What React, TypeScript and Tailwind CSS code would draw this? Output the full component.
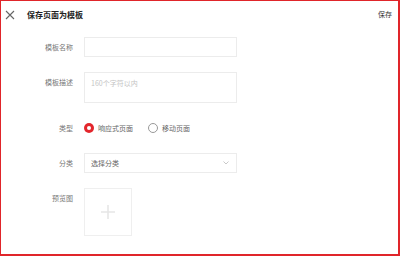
import { useState } from 'react'

const font = { fontFamily: '"Noto Sans CJK SC", "Noto Sans", sans-serif' }

function Row({ label, children, top }: { label: string; children: React.ReactNode; top?: boolean }) {
  return (
    <div className={`flex gap-[11px] ${top ? 'items-start' : 'items-center'}`}>
      <div className={`w-[72px] shrink-0 text-right text-[7px] text-[#777] ${top ? 'leading-[20px]' : ''}`}>{label}</div>
      {children}
    </div>
  )
}

export default function App() {
  const [kind, setKind] = useState<'responsive' | 'mobile'>('responsive')

  return (
    <div
      style={font}
      className="box-border flex h-[256px] w-[400px] flex-col border-b-2 border-l border-r-2 border-t border-[#e0252a] bg-white"
    >
      <div className="flex h-[27px] shrink-0 items-center pl-[4px] pr-[6px]">
        <svg width="10" height="10" viewBox="0 0 10 10" className="mt-[1px]">
          <path d="M1 1L9 9M9 1L1 9" stroke="#666" strokeWidth="1.1" fill="none" />
        </svg>
        <span className="ml-[12px] text-[8px] font-bold text-[#222]">保存页面为模板</span>
        <span className="ml-auto -mt-[1px] text-[7px] text-[#333]">保存</span>
      </div>

      <div className="flex flex-col gap-[15px] pt-[9px]">
        <Row label="模板名称">
          <input className="h-[20px] w-[153px] border border-[#ececec] px-[6px] text-[7px] outline-none" />
        </Row>

        <Row label="模板描述" top>
          <textarea
            placeholder="160个字符以内"
            className="h-[31px] w-[153px] resize-none border border-[#ececec] px-[6px] py-[5px] text-[7px] leading-[10px] outline-none placeholder:text-[#c4c4c4]"
          />
        </Row>

        <Row label="类型">
          <div className="flex h-[20px] items-center text-[7px] text-[#666]">
            <button type="button" onClick={() => setKind('responsive')} className="flex items-center">
              {kind === 'responsive' ? (
                <span className="flex h-[10px] w-[10px] items-center justify-center rounded-full bg-[#e3262c]">
                  <span className="h-[4px] w-[4px] rounded-full bg-white" />
                </span>
              ) : (
                <span className="h-[10px] w-[10px] rounded-full border border-[#999]" />
              )}
              <span className="ml-[4px]">响应式页面</span>
            </button>
            <button type="button" onClick={() => setKind('mobile')} className="ml-[15px] flex items-center">
              {kind === 'mobile' ? (
                <span className="flex h-[10px] w-[10px] items-center justify-center rounded-full bg-[#e3262c]">
                  <span className="h-[4px] w-[4px] rounded-full bg-white" />
                </span>
              ) : (
                <span className="h-[10px] w-[10px] rounded-full border border-[#999]" />
              )}
              <span className="ml-[4px]">移动页面</span>
            </button>
          </div>
        </Row>

        <Row label="分类">
          <div className="flex h-[20px] w-[153px] items-center border border-[#ececec] pl-[6px] pr-[7px] text-[7px] text-[#666]">
            <span>选择分类</span>
            <svg width="6" height="4" viewBox="0 0 6 4" className="ml-auto">
              <path d="M0.5 0.5L3 3L5.5 0.5" stroke="#bbb" strokeWidth="0.8" fill="none" />
            </svg>
          </div>
        </Row>

        <Row label="预览图" top>
          <button
            type="button"
            className="flex h-[48px] w-[48px] items-center justify-center border border-[#efefef]"
          >
            <svg width="14" height="14" viewBox="0 0 14 14">
              <path d="M7 0V14M0 7H14" stroke="#e6e6e6" strokeWidth="1.6" fill="none" />
            </svg>
          </button>
        </Row>
      </div>
    </div>
  )
}
